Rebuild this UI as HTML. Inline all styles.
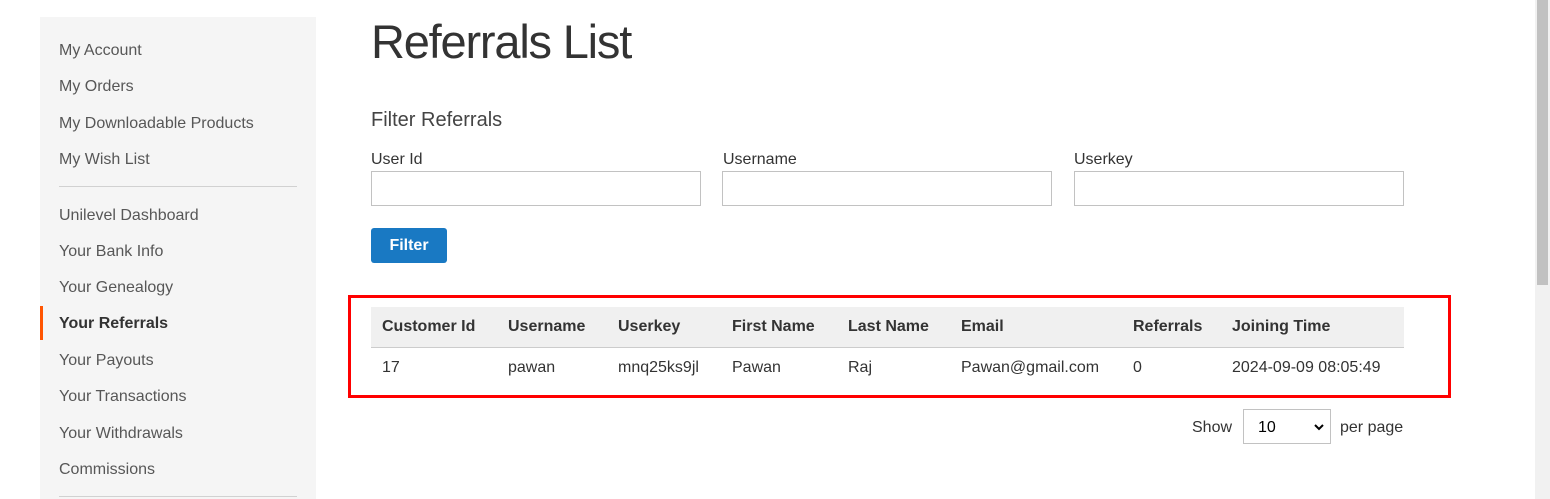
<!DOCTYPE html><html><head><style>
body{margin:0;width:1550px;height:499px;overflow:hidden;background:#fff;font-family:"Liberation Sans",sans-serif;color:#333;position:relative}
.a{position:absolute;white-space:nowrap}
.side{position:absolute;left:40px;top:17px;width:276px;height:482px;background:#f5f5f5}
.nav{position:absolute;left:59px;font-size:16px;color:#575757;line-height:20px}
.sep{position:absolute;left:59px;width:238px;height:1px;background:#d1d1d1}
.inp{position:absolute;top:171px;width:328px;height:33px;border:1px solid #c2c2c2;background:#fff}
.lab{position:absolute;top:151px;font-size:16px}
.th{position:absolute;top:317px;font-size:16px;font-weight:bold;line-height:20px}
.td{position:absolute;top:358px;font-size:16px;line-height:20px}
</style></head><body>
<div class="side"></div>
<div class="nav" style="top:41px">My Account</div>
<div class="nav" style="top:77px">My Orders</div>
<div class="nav" style="top:114px">My Downloadable Products</div>
<div class="nav" style="top:150px">My Wish List</div>
<div class="sep" style="top:186px"></div>
<div class="nav" style="top:206px">Unilevel Dashboard</div>
<div class="nav" style="top:242px">Your Bank Info</div>
<div class="nav" style="top:278px">Your Genealogy</div>
<div style="position:absolute;left:40px;top:306px;width:3px;height:34px;background:#ff5501"></div>
<div class="nav" style="top:314px;color:#333;font-weight:bold">Your Referrals</div>
<div class="nav" style="top:351px">Your Payouts</div>
<div class="nav" style="top:387px">Your Transactions</div>
<div class="nav" style="top:424px">Your Withdrawals</div>
<div class="nav" style="top:460px">Commissions</div>
<div class="sep" style="top:496px"></div>

<div class="a" style="left:371px;top:14px;font-size:47px;line-height:56px;color:#333;letter-spacing:-1.2px">Referrals List</div>
<div class="a" style="left:371px;top:108px;font-size:20px;line-height:24px;color:#444">Filter Referrals</div>
<div class="lab" style="left:371px">User Id</div>
<div class="lab" style="left:723px">Username</div>
<div class="lab" style="left:1074px">Userkey</div>
<div class="inp" style="left:371px"></div>
<div class="inp" style="left:722px"></div>
<div class="inp" style="left:1074px"></div>
<div class="a" style="left:371px;top:228px;width:76px;height:35px;background:#1979c3;border-radius:3px;color:#fff;font-weight:bold;font-size:16px;line-height:35px;text-align:center">Filter</div>

<div style="position:absolute;left:371px;top:307px;width:1033px;height:40px;background:#f0f0f0;border-bottom:1px solid #ccc"></div>
<div class="th" style="left:382px">Customer Id</div>
<div class="th" style="left:508px">Username</div>
<div class="th" style="left:618px">Userkey</div>
<div class="th" style="left:732px">First Name</div>
<div class="th" style="left:848px">Last Name</div>
<div class="th" style="left:961px">Email</div>
<div class="th" style="left:1133px">Referrals</div>
<div class="th" style="left:1232px">Joining Time</div>
<div class="td" style="left:382px">17</div>
<div class="td" style="left:508px">pawan</div>
<div class="td" style="left:618px">mnq25ks9jl</div>
<div class="td" style="left:732px">Pawan</div>
<div class="td" style="left:848px">Raj</div>
<div class="td" style="left:961px">Pawan@gmail.com</div>
<div class="td" style="left:1133px">0</div>
<div class="td" style="left:1232px">2024-09-09 08:05:49</div>
<div style="position:absolute;left:348px;top:295px;width:1097px;height:97px;border:3px solid #f00"></div>

<div class="a" style="left:1192px;top:418px;font-size:16px;line-height:20px">Show</div>
<div style="position:absolute;left:1243px;top:409px;width:86px;height:33px;border:1px solid #c2c2c2;background:#fff"></div>
<div class="a" style="left:1258px;top:418px;font-size:16px;line-height:20px;color:#000">10</div>
<svg class="a" style="left:1314px;top:423px" width="10" height="8"><path d="M1 2l4 4 4-4" stroke="#000" stroke-width="2" fill="none"/></svg>
<div class="a" style="left:1340px;top:418px;font-size:16px;line-height:20px">per page</div>

<div style="position:absolute;left:1535px;top:0;width:15px;height:499px;background:#f1f1f1"></div>
<div style="position:absolute;left:1537px;top:0;width:11px;height:285px;background:#c1c1c1"></div>
</body></html>
